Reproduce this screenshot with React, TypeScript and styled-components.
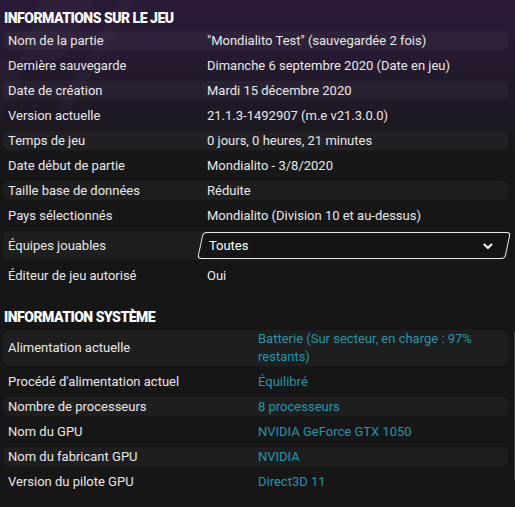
import React from "react";
import styled, { createGlobalStyle } from "styled-components";

const Global = createGlobalStyle`
  html, body { margin: 0; padding: 0; background: #161616; }
  body { font-family: Roboto, "Noto Sans", "Liberation Sans", sans-serif; }
  *, *::before, *::after { box-sizing: border-box; }
`;

const Page = styled.div`
  position: relative;
  width: 515px;
  height: 507px;
  overflow: hidden;
  padding-top: 10px;
  background: linear-gradient(
    180deg,
    #2a1a37 0px,
    #261a32 50px,
    #1f1925 110px,
    #181719 150px,
    #161616 180px
  );
  color: #e6e6e6;
`;

const Decor = styled.svg`
  position: absolute;
  left: 0;
  top: 0;
  pointer-events: none;
`;

const Section = styled.section<{ $gapTop?: number }>`
  position: relative;
  display: flex;
  flex-direction: column;
  margin-top: ${(p) => p.$gapTop ?? 0}px;
`;

const Heading = styled.h2`
  margin: 0 0 5px 4px;
  font-size: 14px;
  line-height: 16px;
  font-weight: 900;
  letter-spacing: -0.5px;
  color: #ffffff;
`;

const List = styled.div`
  display: flex;
  flex-direction: column;
  gap: 6px;
  margin: 0 7px 0 3px;
`;

const Row = styled.div<{ $striped: boolean; $tall?: boolean; $labelWidth: number }>`
  display: grid;
  grid-template-columns: ${(p) => p.$labelWidth}px 1fr;
  align-items: center;
  min-height: ${(p) => (p.$tall ? 29 : 19)}px;
  border-radius: 6px;
  background: ${(p) => (p.$striped ? "rgba(255,255,255,0.035)" : "transparent")};
  font-size: 13px;
  line-height: 18px;
`;

const Label = styled.div`
  padding-left: 5px;
  color: #e8e8e8;
`;

const Value = styled.div<{ $accent?: boolean }>`
  color: ${(p) => (p.$accent ? "#1d98ad" : "#e8e8e8")};
  padding-right: 8px;
`;

const Select = styled.div`
  display: flex;
  align-items: center;
  height: 27px;
  width: 308px;
  margin-left: -7px;
  padding: 0 14px 0 8px;
  border: 1.5px solid #e8e8e8;
  border-radius: 4px;
  background: #151515;
  transform: skewX(-12deg);
`;

const SelectInner = styled.div`
  display: flex;
  align-items: center;
  justify-content: space-between;
  width: 100%;
  transform: skewX(12deg);
  color: #ffffff;
  font-size: 13px;
`;

const Scrollbar = styled.div`
  position: absolute;
  right: 0;
  top: 332px;
  width: 1px;
  height: 148px;
  background: #444444;
`;

type Item = { label: string; value: string; tall?: boolean };

const game: Item[] = [
  { label: "Nom de la partie", value: '"Mondialito Test" (sauvegardée 2 fois)' },
  { label: "Dernière sauvegarde", value: "Dimanche 6 septembre 2020 (Date en jeu)" },
  { label: "Date de création", value: "Mardi 15 décembre 2020" },
  { label: "Version actuelle", value: "21.1.3-1492907 (m.e v21.3.0.0)" },
  { label: "Temps de jeu", value: "0 jours, 0 heures, 21 minutes" },
  { label: "Date début de partie", value: "Mondialito - 3/8/2020" },
  { label: "Taille base de données", value: "Réduite" },
  { label: "Pays sélectionnés", value: "Mondialito (Division 10 et au-dessus)" },
  { label: "Équipes jouables", value: "__select__", tall: true },
  { label: "Éditeur de jeu autorisé", value: "Oui" },
];

const system: Item[] = [
  { label: "Alimentation actuelle", value: "Batterie (Sur secteur, en charge : 97% restants)" },
  { label: "Procédé d'alimentation actuel", value: "Équilibré" },
  { label: "Nombre de processeurs", value: "8 processeurs" },
  { label: "Nom du GPU", value: "NVIDIA GeForce GTX 1050" },
  { label: "Nom du fabricant GPU", value: "NVIDIA" },
  { label: "Version du pilote GPU", value: "Direct3D 11" },
];

const Chevron = () => (
  <svg width="10" height="7" viewBox="0 0 10 7">
    <path d="M1.5 1.5 L5 5 L8.5 1.5" fill="none" stroke="#fff" strokeWidth="2" strokeLinecap="round" strokeLinejoin="round" />
  </svg>
);

export default function App() {
  return (
    <Page>
      <Global />
      <Decor width="515" height="180" viewBox="0 0 515 180">
        <polygon points="40,0 95,0 60,60 20,60" fill="rgba(255,255,255,0.025)" />
        <polygon points="120,0 135,0 70,110 55,110" fill="rgba(255,255,255,0.02)" />
        <polygon points="0,60 30,60 0,120" fill="rgba(255,255,255,0.015)" />
      </Decor>
      <Section>
        <Heading>INFORMATIONS SUR LE JEU</Heading>
        <List>
          {game.map((it, i) => (
            <Row key={it.label} $striped={i % 2 === 0} $tall={it.tall} $labelWidth={204}>
              <Label>{it.label}</Label>
              {it.value === "__select__" ? (
                <Select>
                  <SelectInner>
                    <span>Toutes</span>
                    <Chevron />
                  </SelectInner>
                </Select>
              ) : (
                <Value>{it.value}</Value>
              )}
            </Row>
          ))}
        </List>
      </Section>
      <Section $gapTop={24}>
        <Heading>INFORMATION SYSTÈME</Heading>
        <List>
          {system.map((it, i) => (
            <Row key={it.label} $striped={i % 2 === 0} $labelWidth={255}>
              <Label>{it.label}</Label>
              <Value $accent>{it.value}</Value>
            </Row>
          ))}
        </List>
      </Section>
      <Scrollbar />
    </Page>
  );
}
